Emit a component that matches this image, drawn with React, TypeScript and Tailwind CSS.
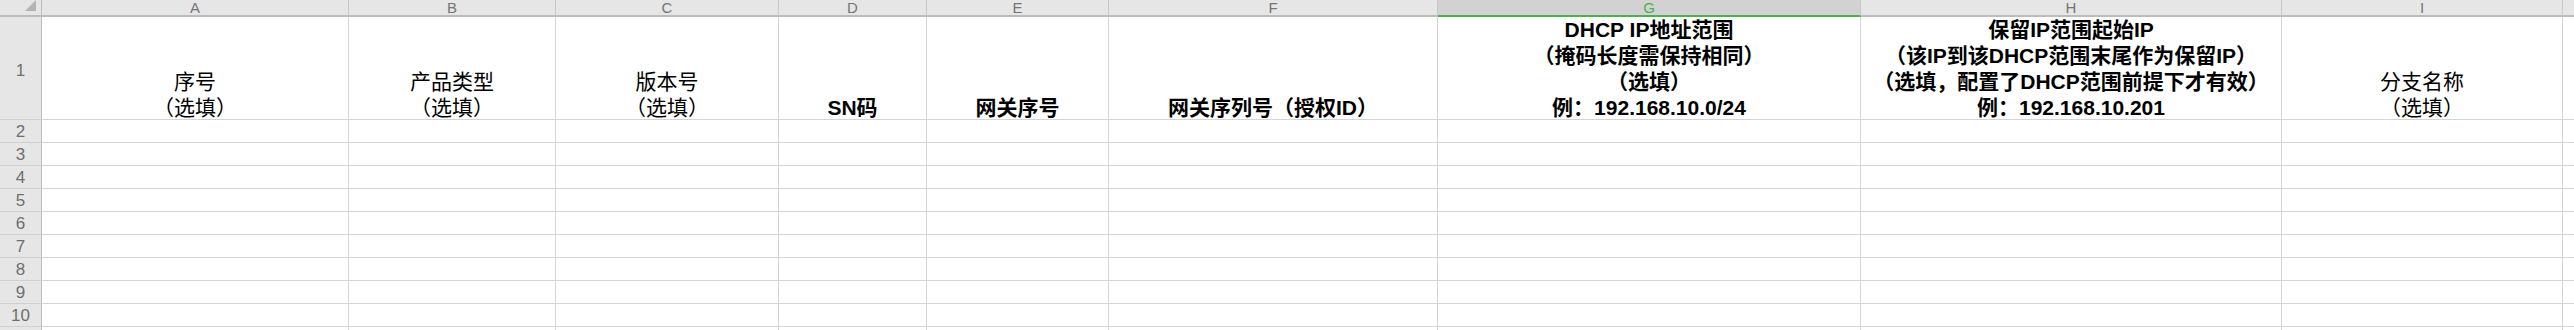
const letters = ['A', 'B', 'C', 'D', 'E', 'F', 'G', 'H', 'I', '']

type Head = { lines: string[]; bold?: boolean }

const heads: Head[] = [
  { lines: ['序号', '（选填）'] },
  { lines: ['产品类型', '（选填）'] },
  { lines: ['版本号', '（选填）'] },
  { lines: ['SN码'], bold: true },
  { lines: ['网关序号'], bold: true },
  { lines: ['网关序列号（授权ID）'], bold: true },
  {
    lines: ['DHCP IP地址范围', '（掩码长度需保持相同）', '（选填）', '例：192.168.10.0/24'],
    bold: true,
  },
  {
    lines: [
      '保留IP范围起始IP',
      '（该IP到该DHCP范围末尾作为保留IP）',
      '（选填，配置了DHCP范围前提下才有效）',
      '例：192.168.10.201',
    ],
    bold: true,
  },
  { lines: ['分支名称', '（选填）'] },
  { lines: [] },
]

// row 11 is only a few pixels tall in the shot, its number is not visible
const rows = [2, 3, 4, 5, 6, 7, 8, 9, 10, 11]

function RowLabel({ n, tall }: { n: number; tall?: boolean }) {
  return (
    <div
      className={`flex justify-center bg-[#e6e6e6] border-r border-b border-r-[#bdbdbd] border-b-[#d0d0d0] text-[17px] text-[#6f6f6f] ${
        tall ? 'h-[103px] items-center pt-[6px]' : 'h-[23px] items-center leading-[22px] pt-[1px]'
      }`}
    >
      {n < 11 ? n : null}
    </div>
  )
}

export default function App() {
  return (
    <div className="w-[2574px] h-[330px] overflow-hidden bg-white font-['Liberation_Sans','Noto_Sans_CJK_SC',sans-serif]">
      <div className="grid grid-cols-[42px_307px_207px_223px_148px_182px_329px_423px_421px_281px_1fr]">
        {/* column letters */}
        <div className="relative h-[17px] bg-[#e6e6e6] border-r border-b-2 border-r-[#bdbdbd] border-b-[#bcbcbc]">
          <svg className="absolute left-[25px] top-0" width="12" height="12" viewBox="0 0 12 12">
            <polygon points="0,11 11,11 11,0" fill="#b4b4b4" />
          </svg>
        </div>
        {letters.map((l, i) => (
          <div
            key={i}
            className={`h-[17px] flex justify-center border-b-2 text-[15px] leading-[15px] ${
              i < 9 ? 'border-r border-r-[#c8c8c8]' : ''
            } ${
              l === 'G'
                ? 'bg-[#d2d2d2] border-b-[#4caf50] text-[#4caf50]'
                : 'bg-[#e6e6e6] border-b-[#bcbcbc] text-[#767676]'
            }`}
          >
            {l}
          </div>
        ))}

        {/* row 1 : titles */}
        <RowLabel n={1} tall />
        {heads.map((h, i) => (
          <div
            key={i}
            className={`h-[103px] flex flex-col items-center justify-end border-b border-[#d4d4d4] text-black text-[21px] leading-[26px] whitespace-nowrap ${
              i < 9 ? 'border-r' : ''
            } ${h.bold ? 'font-bold' : 'font-normal'}`}
          >
            <div className="flex flex-col items-center -mb-[2px]">
              {h.lines.map((t, j) => (
                <div key={j}>{t}</div>
              ))}
            </div>
          </div>
        ))}

        {/* empty rows */}
        {rows.map((r) => (
          <div key={r} className="contents">
            <RowLabel n={r} />
            {letters.map((_, i) => (
              <div
                key={i}
                className={`h-[23px] border-b border-[#d4d4d4] ${i < 9 ? 'border-r' : ''}`}
              />
            ))}
          </div>
        ))}
      </div>
    </div>
  )
}
